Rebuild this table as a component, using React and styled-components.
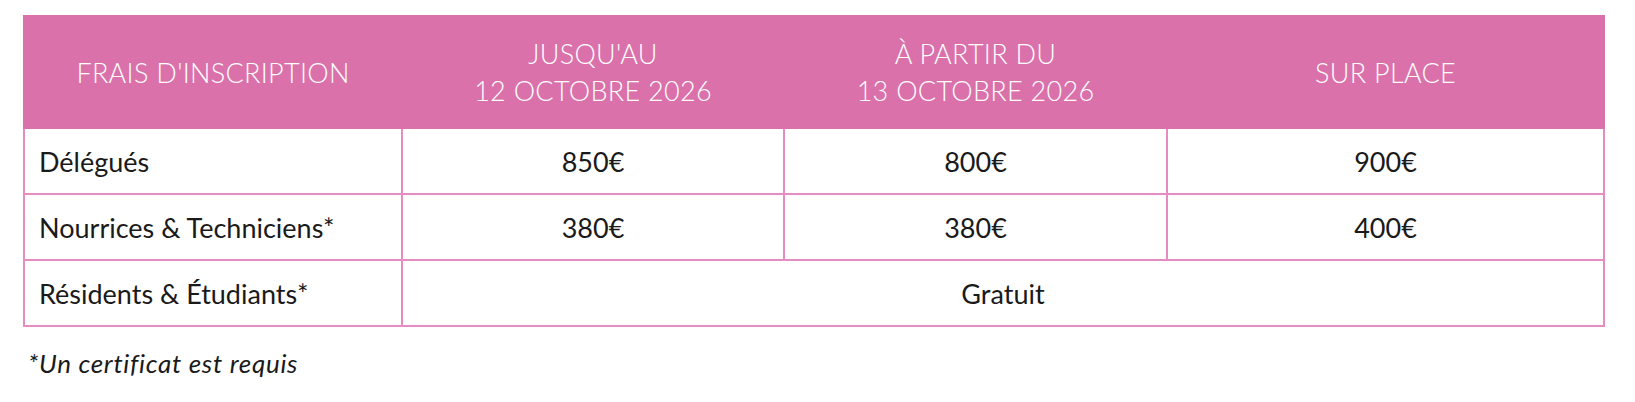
import React from 'react';
import styled, { createGlobalStyle } from 'styled-components';

const GlobalStyle = createGlobalStyle`
  body {
    margin: 0;
    background: #fff;
    font-family: 'Lato', 'Noto Sans', sans-serif;
    color: #1a1a1a;
  }
`;

const Page = styled.div`
  padding: 15px 31px 0 23px;
`;

const Table = styled.table`
  width: 1580px;
  border-collapse: collapse;
  table-layout: fixed;
`;

const HeadCell = styled.th`
  background: #db71aa;
  color: #fff;
  font-weight: 300;
  font-size: 27px;
  letter-spacing: 0.3px;
  line-height: 37px;
  height: 110px;
  padding: 0 10px;
  text-align: center;
  vertical-align: middle;
  border: 2px solid #db71aa;
`;

const Cell = styled.td`
  border: 2px solid #e68cc1;
  height: 64px;
  font-size: 27px;
  font-weight: 400;
  text-align: ${(p) => (p.$left ? 'left' : 'center')};
  padding: ${(p) => (p.$left ? '0 14px' : '0')};
  vertical-align: middle;
`;

const Note = styled.p`
  margin: 20px 0 0 5px;
  font-style: italic;
  font-size: 26px;
  letter-spacing: 0.7px;
`;

const columns = [
  { w: 378, label: ["FRAIS D'INSCRIPTION"] },
  { w: 382, label: ["JUSQU'AU", '12 OCTOBRE 2026'] },
  { w: 383, label: ['À PARTIR DU', '13 OCTOBRE 2026'] },
  { w: 437, label: ['SUR PLACE'] },
];

const rows = [
  { name: 'Délégués', prices: ['850€', '800€', '900€'] },
  { name: 'Nourrices & Techniciens*', prices: ['380€', '380€', '400€'] },
];

export default function App() {
  return (
    <Page>
      <GlobalStyle />
      <Table>
        <colgroup>
          {columns.map((c, i) => (
            <col key={i} style={{ width: c.w }} />
          ))}
        </colgroup>
        <thead>
          <tr>
            {columns.map((c, i) => (
              <HeadCell key={i}>
                {c.label.map((l, j) => (
                  <div key={j}>{l}</div>
                ))}
              </HeadCell>
            ))}
          </tr>
        </thead>
        <tbody>
          {rows.map((r) => (
            <tr key={r.name}>
              <Cell $left>{r.name}</Cell>
              {r.prices.map((p, i) => (
                <Cell key={i}>{p}</Cell>
              ))}
            </tr>
          ))}
          <tr>
            <Cell $left>Résidents & Étudiants*</Cell>
            <Cell colSpan={3}>Gratuit</Cell>
          </tr>
        </tbody>
      </Table>
      <Note>*Un certificat est requis</Note>
    </Page>
  );
}
